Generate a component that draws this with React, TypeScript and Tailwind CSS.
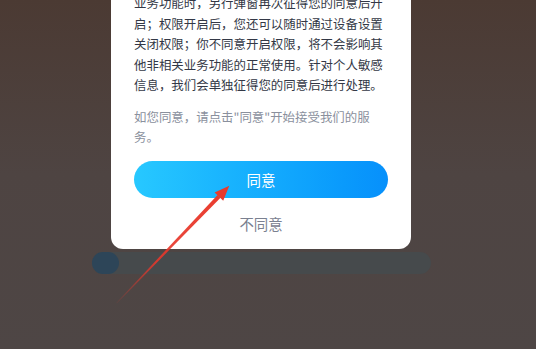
import React from "react";

const font = { fontFamily: '"Noto Sans CJK SC", "Noto Sans", sans-serif' };

export default function App() {
  return (
    <div
      className="relative h-[349px] w-[536px] overflow-hidden bg-gradient-to-b from-[#4b3a33] via-[#4e4442] to-[#4e4645]"
      style={font}
    >
      <div className="ml-[111px] mt-[-7px] w-[300px] rounded-b-[12px] bg-white pb-[14.5px]">
        <div className="pl-[23px]">
          <p className="w-[250px] text-[12.45px] leading-[20.5px] text-[#333846]">
            业务功能时，另行弹窗再次征得您的同意后开启；权限开启后，您还可以随时通过设备设置关闭权限；你不同意开启权限，将不会影响其他非相关业务功能的正常使用。针对个人敏感信息，我们会单独征得您的同意后进行处理。
          </p>
          <p className="mt-[11.25px] w-[250px] text-[12.45px] leading-[20.5px] text-[#8a909d]">
            如您同意，请点击"同意"开始接受我们的服务。
          </p>
        </div>
        <div className="mx-[23px] mt-[13px] flex h-[37.5px] items-center justify-center rounded-full bg-gradient-to-r from-[#27c8ff] to-[#0790fb] text-[14.5px] text-white">
          同意
        </div>
        <div className="mt-[15.8px] text-center text-[14.4px] leading-[20px] text-[#7a8090]">
          不同意
        </div>
      </div>
      <div className="ml-[92px] mt-[3.5px] flex h-[22px] w-[339px] items-center rounded-full bg-[#464a4c]">
        <div className="h-[22px] w-[27px] rounded-full bg-[#2d4558]" />
      </div>
      <svg
        className="pointer-events-none absolute inset-0"
        width="536"
        height="349"
        viewBox="0 0 536 349"
      >
        <defs>
          <linearGradient
            id="ar"
            gradientUnits="userSpaceOnUse"
            x1="116.7"
            y1="303"
            x2="229.3"
            y2="185.7"
          >
            <stop offset="0" stopColor="#e3362b" stopOpacity="0.1" />
            <stop offset="0.35" stopColor="#e6372b" stopOpacity="0.9" />
            <stop offset="1" stopColor="#ea3a2c" stopOpacity="1" />
          </linearGradient>
        </defs>
        <polygon
          points="117.0,303.3 116.4,302.7 217.5,195.1 220.3,197.9"
          fill="url(#ar)"
        />
        <polygon points="229.3,185.7 223.2,200.7 218.9,196.5 214.6,192.4" fill="#ea3a2c" />
      </svg>
    </div>
  );
}
